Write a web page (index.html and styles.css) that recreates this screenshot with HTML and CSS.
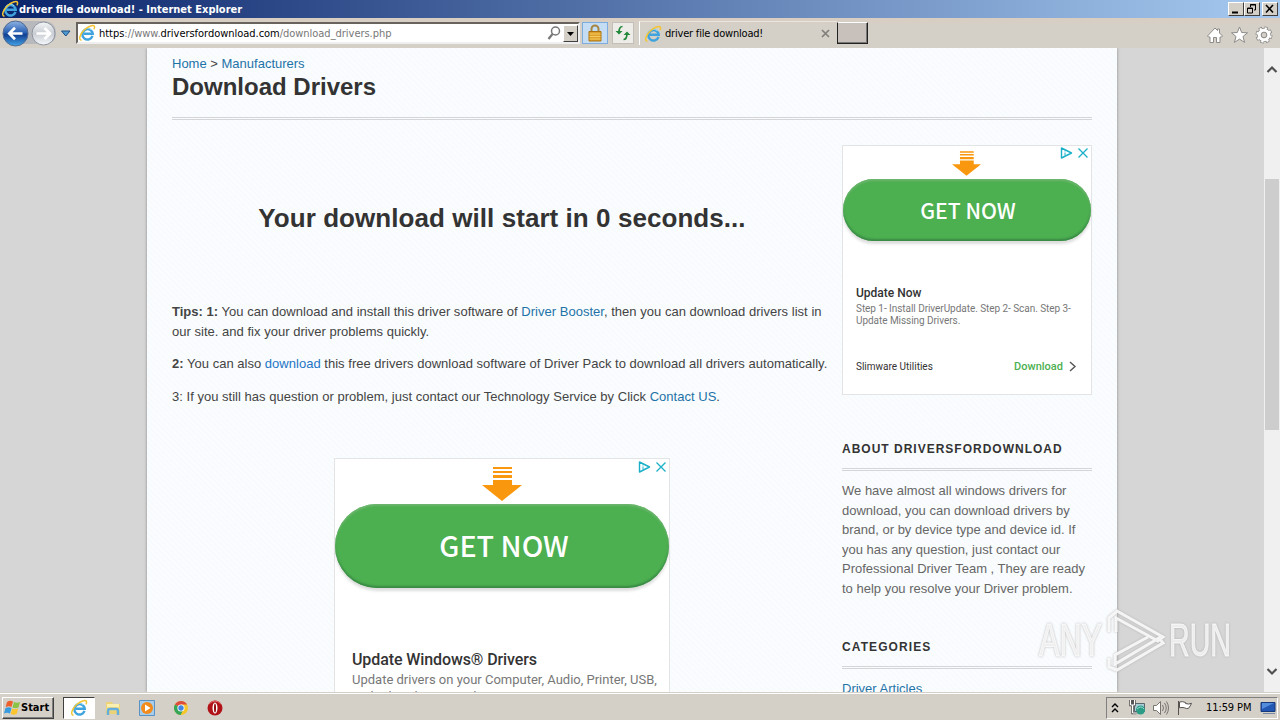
FILE: index.html
```
<!DOCTYPE html>
<html lang="en">
<head>
<meta charset="UTF-8">
<title>driver file download!</title>
<link rel="stylesheet" href="styles.css">
</head>
<body>
<svg class="defs" width="0" height="0">
 <defs>
  <linearGradient id="blue" x1="0" y1="0" x2="0" y2="1">
   <stop offset="0" stop-color="#8eb4e3"/><stop offset=".45" stop-color="#2c62b4"/>
   <stop offset=".55" stop-color="#123f92"/><stop offset="1" stop-color="#43a5e8"/>
  </linearGradient>
  <linearGradient id="silver" x1="0" y1="0" x2="0" y2="1">
   <stop offset="0" stop-color="#f4f6f8"/><stop offset=".5" stop-color="#c9cdd3"/><stop offset="1" stop-color="#f5f9fc"/>
  </linearGradient>
  <symbol id="ie" viewBox="-.5 -.5 17 17">
   <path d="M13.200 10.800A4.900 4.900 0 1 1 13.400 8.700H5" fill="none" stroke="#3fa3de" stroke-width="2.300"/>
   <path d="M4 6.100A5 5 0 0 1 12 5" fill="none" stroke="#8ad6f6" stroke-width="1"/>
   <path d="M2.800 14.800C-.5 14.500 1.300 9 5.600 5 9.400 1.500 14 .1 15 1.600c.5.8.1 2-.5 3" fill="none" stroke="#f2c536" stroke-width="1.400"/>
  </symbol>
  <symbol id="arrow" viewBox="0 0 40 34">
   <path d="M11 0h19v2H11zM11 4h19v2H11zM11 8h19v3H11zM11 13h19v5h10L20 34 0 18h11z" fill="#f9980f"/>
  </symbol>
  <symbol id="adchoices" viewBox="0 0 28 12">
   <path d="M1.500 1v10L11.500 6z" fill="none" stroke="#1bb0c8" stroke-width="1.400" stroke-linejoin="round"/>
   <path d="M5 5.500v3M5 3.500v1" stroke="#1bb0c8"/>
   <path d="M18.500 1.500l9 9M27.500 1.500l-9 9" stroke="#1bb0c8" stroke-width="1.300"/>
  </symbol>
 </defs>
</svg>

<header class="titlebar">
 <svg class="icon18"><use href="#ie"/></svg>
 <span class="title">driver file download! - Internet Explorer</span>
 <div class="window-buttons">
  <span class="wbtn"><svg width="12" height="10"><path d="M2 8.500h6" stroke="#000" stroke-width="2"/></svg></span>
  <span class="wbtn"><svg width="12" height="10"><path d="M4.500 3V.5h5V6H8M4 1h6M1.500 4h5v5h-5zM1 4.500h6" fill="none" stroke="#000"/></svg></span>
  <span class="wbtn last"><svg width="12" height="10"><path d="M2 1l7 7.500M9 1L2 8.500" stroke="#000" stroke-width="1.600"/></svg></span>
 </div>
</header>

<nav class="toolbar">
 <svg class="navbtns" width="76" height="30">
  <path d="M14 3h30q12 1 12 12t-12 11H14z" fill="#b8b9bd"/>
  <circle cx="15.500" cy="15.500" r="12.500" fill="url(#blue)" stroke="#52698e"/>
  <path d="M22.500 15.500H10M15 9.800l-5.700 5.700 5.700 5.700" fill="none" stroke="#fff" stroke-width="2.700"/>
  <circle cx="43.500" cy="15.500" r="11.500" fill="url(#silver)" stroke="#8d949e"/>
  <path d="M36.500 15.500H49M44.500 10l5.500 5.500-5.500 5.500" fill="none" stroke="#fff" stroke-width="2.700"/>
  <path d="M61.500 13h8.500l-4.200 5z" fill="#4e9bd2" stroke="#1c4d83"/>
 </svg>
 <div class="address">
  <svg class="icon18"><use href="#ie"/></svg>
  <span class="url"><b>https</b>://www.<b>driversfordownload.com</b>/download_drivers.php</span>
  <svg class="search" width="15" height="16"><circle cx="8.500" cy="6" r="4" fill="none" stroke="#777" stroke-width="1.500"/><path d="M5.500 9L1.500 14" stroke="#777" stroke-width="2.200"/></svg>
  <span class="dropdown"><svg width="9" height="5"><path d="M1 0h7L4.500 4z"/></svg></span>
 </div>
 <span class="lock"><svg width="16" height="18">
  <path d="M4.500 8V5a3.500 3.500 0 0 1 7 0v3" fill="none" stroke="#a58643" stroke-width="2"/>
  <path d="M2 7.500h12V17H2z" fill="#dda12b" stroke="#a97312"/><path d="M2.500 10h11M2.500 12.500h11M2.500 15h11" stroke="#f5ca61"/>
 </svg></span>
 <span class="refresh"><svg width="16" height="16" fill="none" stroke="#218a3a" stroke-width="1.700">
  <path d="M7.500 1.500q-3.500 0-3.500 6"/><path d="M8.500 14.500q3.500 0 3.500-6"/>
  <path d="M.5 6h7L4 9.500zM8.500 10h7L12 6.500z" fill="#218a3a" stroke="none"/>
 </svg></span>
 <div class="tab">
  <svg class="icon18"><use href="#ie"/></svg>
  <span class="tab-title">driver file download!</span>
  <svg class="tab-close" width="9" height="9"><path d="M1 1l7 7M8 1L1 8" stroke="#827f7b" stroke-width="1.700"/></svg>
 </div>
 <span class="newtab"></span>
 <svg class="tools" width="68" height="18" fill="#fff" stroke="#8d8b88">
  <path d="M1.500 10L9 2l2.500 2.500V3h2v4L16.500 10l-1 1h-1.500V16.500h-3.500v-5h-3v5H4V11H2.500z"/>
  <path d="M33.500 1l2.200 5.500 5.800.3-4.500 3.700 1.600 5.900-5.100-3.300-5.100 3.300 1.600-5.900-4.500-3.700 5.800-.3z"/>
  <circle cx="58" cy="9" r="5.500" fill="none" stroke-width="3"/>
  <circle cx="58" cy="9" r="7" fill="none" stroke-width="3" stroke-dasharray="3.500 2"/>
  <circle cx="58" cy="9" r="6.700" fill="none" stroke="#fff" stroke-width="2" stroke-dasharray="2.200 3.060" stroke-dashoffset="-.5"/>
  <circle cx="58" cy="9" r="4.700" fill="none" stroke="#fff" stroke-width="3"/>
  <circle cx="58" cy="9" r="2.800" fill="#d4d0c8"/>
 </svg>
</nav>

<div class="viewport">
 <div class="page">
  <div class="breadcrumb"><a href="#">Home</a> &gt; <a href="#">Manufacturers</a></div>
  <h1>Download Drivers</h1>
  <div class="columns">
   <main>
    <h2>Your download will start in 0 seconds...</h2>
    <div class="tips">
     <p><b>Tips: 1:</b> You can download and install this driver software of <a href="#">Driver Booster</a>, then you can download drivers list in<br>our site. and fix your driver problems quickly.</p>
     <p><b>2:</b> You can also <a class="bright" href="#">download</a> this free drivers download software of Driver Pack to download all drivers automatically.</p>
     <p>3: If you still has question or problem, just contact our Technology Service by Click <a href="#">Contact US</a>.</p>
    </div>
    <div class="ad ad-large">
     <svg class="choices" width="28" height="12"><use href="#adchoices"/></svg>
     <svg class="down" width="40" height="34"><use href="#arrow"/></svg>
     <div class="get-now">GET NOW</div>
     <div class="ad-title">Update Windows® Drivers</div>
     <div class="ad-text">Update drivers on your Computer, Audio, Printer, USB,<br>and other devices today</div>
    </div>
   </main>
   <aside>
    <div class="ad ad-small">
     <svg class="choices" width="28" height="12"><use href="#adchoices"/></svg>
     <svg class="down" width="29" height="25"><use href="#arrow"/></svg>
     <div class="get-now">GET NOW</div>
     <div class="ad-title">Update Now</div>
     <div class="ad-text">Step 1- Install DriverUpdate. Step 2- Scan. Step 3-<br>Update Missing Drivers.</div>
     <div class="ad-foot">
      <span>Slimware Utilities</span>
      <span class="cta">Download <svg width="8" height="11"><path d="M1 1l5 4.500L1 10" fill="none" stroke="#555" stroke-width="1.400"/></svg></span>
     </div>
    </div>
    <h3>ABOUT DRIVERSFORDOWNLOAD</h3>
    <p>We have almost all windows drivers for<br>download, you can download drivers by<br>brand, or by device type and device id. If<br>you has any question, just contact our<br>Professional Driver Team , They are ready<br>to help you resolve your Driver problem.</p>
    <h3 class="categories">CATEGORIES</h3>
    <p><a href="#">Driver Articles</a></p>
   </aside>
  </div>
 </div>
 <div class="scrollbar">
  <svg width="12" height="9"><path d="M1.500 7L6 2.500 10.500 7" fill="none" stroke="#505050" stroke-width="2.200"/></svg>
  <div class="thumb"></div>
  <svg width="12" height="9"><path d="M1.500 2L6 6.500 10.500 2" fill="none" stroke="#505050" stroke-width="2.200"/></svg>
 </div>
 <svg class="watermark" width="200" height="66">
  <text x="3" y="48" textLength="63" lengthAdjust="spacingAndGlyphs">ANY</text>
  <path d="M73 24V10l8-7 46 26-5 4-42-23v14M73 50v9l8 3 46-27-4-5-44 26V47l33-18"/>
  <text x="133" y="48" textLength="62" lengthAdjust="spacingAndGlyphs">RUN</text>
 </svg>
</div>

<footer class="taskbar">
 <span class="start"><svg width="17" height="17">
  <path d="M3 3q3-2 6-.5L7.500 8Q5 6.500 1.700 8z" fill="#ed602c"/><path d="M10 3q3 1.500 6 0L14.500 8.500q-3 1.500-6 0z" fill="#8bc345"/>
  <path d="M1.500 9q3-1.500 6 0L6 14.500Q3 13 0 14.500z" fill="#379ce0"/><path d="M8.200 9.500q3 1.500 6 0L12.700 15q-3 1.500-6 0z" fill="#fcc52f"/>
 </svg>Start</span>
 <span class="task active"><svg class="icon18"><use href="#ie"/></svg></span>
 <span class="task"><svg width="18" height="18">
  <path d="M2 3h6l1 2h7v10H2z" fill="#ecd276"/><path d="M3 5h12v5H3z" fill="#fbf0b0"/><path d="M2 8h14v4H2z" fill="#efda83"/>
  <path d="M4 16v-4q0-2 2-2h6q2 0 2 2v4" fill="none" stroke="#65aede" stroke-width="2.500"/>
 </svg></span>
 <span class="task"><svg width="18" height="18">
  <path d="M1.500 1.500h15v15h-15z" fill="#a6cdec" stroke="#5a92c4"/><circle cx="9" cy="9" r="6" fill="#f28b1c"/><path d="M7 5.500v7L12.500 9z" fill="#fff"/>
 </svg></span>
 <span class="task"><svg width="18" height="18">
  <circle cx="9" cy="9" r="7" fill="#f5c62c"/><path d="M9 9L2.900 5.500A7 7 0 0 1 15.100 5.500H9z" fill="#dd4b3e"/>
  <path d="M9 9L2.900 5.500A7 7 0 0 0 8.500 16l3.300-6z" fill="#36a557"/><circle cx="9" cy="9" r="3.600" fill="#fff"/><circle cx="9" cy="9" r="2.700" fill="#4385e5"/>
 </svg></span>
 <span class="task"><svg width="18" height="18"><circle cx="9" cy="9" r="7.500" fill="#b01218"/><path d="M3 5q6-6 12 0" fill="none" stroke="#e27070"/><ellipse cx="9" cy="9" rx="2.500" ry="5.500" fill="#fff"/><ellipse cx="9" cy="9" rx="1" ry="4.500" fill="#91090e"/></svg></span>
 <div class="tray">
  <svg width="8" height="12"><path d="M1 5l3-3 3 3M1 10l3-3 3 3" fill="none" stroke="#000" stroke-width="1.400"/></svg>
  <svg class="net" width="18" height="18"><path d="M5.500 4.500h10v8h-10z" fill="#a7ccd5" stroke="#57666b"/><circle cx="11.500" cy="11" r="4.500" fill="#2d9c87"/><path d="M8 10q4-4 7 0" fill="none" stroke="#8edbd0"/><path d="M1.500 1v5h4V1M3.500 1v13h4" fill="none" stroke="#555" stroke-width="2.500"/><path d="M1.500 1v5h4V1M3.500 6v8h4" fill="none" stroke="#fff"/></svg>
  <svg class="sound" width="18" height="18" fill="none" stroke="#77736e"><path d="M1.500 6.500h3l4-4v13l-4-4h-3z" fill="#fff"/><path d="M10.500 6q2 3 0 6M12.500 4q3.500 5 0 10M14.500 2.500q4 6.500 0 13"/></svg>
  <svg class="flag" width="18" height="18"><path d="M2.500 2v14M3.500 3q3-1 6 .5v1q3 1.200 6-.2-1 2.700-3 5-2 .8-4-.5-2.500-.7-5 0z" fill="#fff" stroke="#55524f"/></svg>
  <span class="clock">11:59 PM</span>
  <svg class="desktop" width="17" height="16"><path d="M1 2.500h14v9H1z" fill="#2257b3" stroke="#153979"/><path d="M2 3h12L2 9z" fill="#558ddd"/><path d="M3 13.500h12" stroke="#778aa5"/></svg>
 </div>
</footer>
</body>
</html>
```
FILE: styles.css
```
* {
  box-sizing: border-box;
}
body {
  margin: 0;
  width: 1280px;
  height: 720px;
  overflow: hidden;
  display: flex;
  flex-direction: column;
  font-family: "Liberation Sans", Arial, sans-serif;
  font-size: 13px;
}
svg {
  display: block;
  flex: none;
}
.defs {
  position: absolute;
}
.icon18 {
  width: 18px;
  height: 18px;
}

/* browser chrome */
.titlebar {
  flex: none;
  height: 18px;
  display: flex;
  align-items: center;
  padding-left: 1px;
  background: linear-gradient(to right, #0a246a, #a6caf0);
  color: #fff;
}
.title {
  font: bold 11px "DejaVu Sans Condensed", "DejaVu Sans", sans-serif;
  white-space: nowrap;
}
.window-buttons {
  display: flex;
  margin-left: auto;
  padding-right: 2px;
}
.wbtn {
  width: 16px;
  height: 14px;
  padding: 1px;
  background: #d4d0c8;
  border: 1px solid;
  border-color: #fff #404040 #404040 #fff;
}
.wbtn.last {
  margin-left: 2px;
}
.toolbar {
  flex: none;
  height: 30px;
  display: flex;
  align-items: center;
  background: linear-gradient(#dacdc1, #d4d0c8 8px);
  font: 11px "DejaVu Sans Condensed", "DejaVu Sans", sans-serif;
}
.address {
  width: 504px;
  height: 22px;
  display: flex;
  align-items: center;
  background: #fff;
  border: 2px solid;
  border-color: #68635d #eee #eee #68635d;
}
.url {
  margin-left: 3px;
  color: #777;
  letter-spacing: -.03px;
}
.url b {
  font-weight: normal;
  color: #000;
}
.search {
  margin-left: auto;
  margin-right: 1px;
}
.dropdown {
  width: 15px;
  height: 17px;
  padding: 6px 2px;
  background: #d4d0c8;
  border: 1px solid;
  border-color: #fff #404040 #404040 #fff;
}
.lock {
  width: 26px;
  height: 22px;
  margin-left: 2px;
  padding: 1px 4px;
  background: #c5dcf5;
  border: 1px solid #7eacdd;
}
.refresh {
  width: 22px;
  height: 22px;
  margin-left: 4px;
  padding: 2px;
  background: #eeece8;
  border: 1px solid #c3bfb8;
}
.tab {
  width: 198px;
  height: 24px;
  margin-left: 5px;
  padding: 0 7px 0 4px;
  display: flex;
  align-items: center;
  border-left: 1px solid #fff;
  border-top: 1px solid #e9e6e0;
}
.tab-title {
  margin-left: 3px;
  letter-spacing: -.2px;
}
.tab-close {
  margin-left: auto;
}
.newtab {
  width: 31px;
  height: 22px;
  background: #c8c1bb;
  border: 1px solid;
  border-color: #fff #222 #222 #222;
  box-shadow: inset -1px -1px #777;
}
.tools {
  margin-left: auto;
  margin-right: 6px;
  margin-top: 4px;
}

/* web page */
.viewport {
  position: relative;
  height: 644px;
  display: flex;
  overflow: hidden;
  background: #d6d6d6;
}
.page {
  width: 970px;
  height: 644px;
  margin-left: 147px;
  padding: 6px 25px 0;
  overflow: hidden;
  background: repeating-linear-gradient(45deg, #f8fbfd 0 2px, #fafcfe 2px 4px);
  box-shadow: 0 0 3px #888;
  line-height: 19.5px;
  color: #444;
}
a {
  color: #1e73a8;
  text-decoration: none;
}
a.bright {
  color: #2476c6;
}
.breadcrumb {
  height: 19px;
}
h1 {
  height: 47px;
  margin: 0;
  border-bottom: 3px double #d3d5d6;
  font-size: 24px;
  line-height: 27px;
  color: #333;
}
.columns {
  display: flex;
  justify-content: space-between;
}
main {
  width: 660px;
}
h2 {
  margin: 82px 0 0;
  font-size: 26px;
  letter-spacing: .06px;
  line-height: 32px;
  text-align: center;
  color: #333;
}
.tips {
  padding-top: 68px;
  letter-spacing: .02px;
  white-space: nowrap;
}
p {
  margin: 0 0 13px;
}
aside {
  width: 250px;
  padding-top: 25px;
  color: #666;
}
h3 {
  height: 32px;
  margin: 44px 0 10px;
  border-bottom: 3px double #d3d5d6;
  font-size: 12px;
  letter-spacing: 1px;
  line-height: 20px;
  white-space: nowrap;
  color: #333;
}
h3.categories {
  margin-top: 39px;
  letter-spacing: 1.1px;
}

/* adverts */
.ad {
  position: relative;
  background: #fff;
  border: 1px solid #e2e4e6;
  font-family: Roboto, sans-serif;
  color: #777;
  white-space: nowrap;
}
.choices {
  position: absolute;
  top: 2px;
  right: 3px;
}
.get-now {
  background: #4caf50;
  color: #fff;
  text-align: center;
  font-family: "Noto Sans CJK SC", sans-serif;
  font-weight: 500;
  box-shadow: inset 0 2px 2px #6cb56d, inset 0 -2px 2px #398945, 0 3px 3px #ddd;
}
.ad-title {
  font-weight: 500;
  color: #333;
}
.ad-large {
  width: 336px;
  height: 280px;
  margin: 52px auto 0 162px;
}
.ad-large .down {
  margin: 8px auto 3px 147px;
}
.ad-large .get-now {
  height: 84px;
  border-radius: 42px;
  font-size: 28.7px;
  line-height: 81px;
  padding-left: 4px;
}
.ad-large .ad-title {
  margin: 62px 0 0 17px;
  font-size: 16px;
  letter-spacing: -.1px;
  line-height: 20px;
}
.ad-large .ad-text {
  margin-left: 17px;
  font-size: 13px;
  line-height: 17px;
  padding-top: 1px;
}
.ad-small {
  height: 250px;
}
.ad-small .choices {
  top: 1px;
}
.ad-small .down {
  margin: 5px auto 3px 109px;
}
.ad-small .get-now {
  height: 62px;
  border-radius: 31px;
  font-size: 21.2px;
  line-height: 61px;
  padding-left: 2px;
}
.ad-small .ad-title {
  margin: 44px 0 0 13px;
  font-size: 12px;
  line-height: 16px;
}
.ad-small .ad-text {
  margin-left: 13px;
  font-size: 10px;
  letter-spacing: -.05px;
  line-height: 12px;
  padding-top: 2px;
}
.ad-foot {
  display: flex;
  justify-content: space-between;
  align-items: center;
  margin: 30px 14px 0 13px;
  font-size: 10px;
  color: #333;
}
.cta {
  display: flex;
  align-items: center;
  gap: 6px;
  margin-top: -1px;
  font-size: 11px;
  font-weight: 500;
  color: #4caf50;
}

.scrollbar {
  width: 16px;
  height: 644px;
  margin-left: auto;
  display: flex;
  flex-direction: column;
  align-items: center;
  justify-content: space-between;
  padding: 17px 0 16px;
  background: #f0f0f0;
}
.thumb {
  width: 14px;
  height: 251px;
  margin-bottom: 132px;
  background: #cdcdcd;
}
.watermark {
  position: absolute;
  left: 1036px;
  top: 560px;
  fill: rgba(255, 255, 255, .75);
  stroke: rgba(255, 255, 255, .75);
  filter: drop-shadow(0 0 1px #aaa);
  font: 47px "Liberation Sans", Arial, sans-serif;
}
.watermark path {
  fill: none;
  stroke: rgba(255, 255, 255, .85);
  stroke-width: 3;
}

/* taskbar */
.taskbar {
  flex: none;
  height: 28px;
  display: flex;
  align-items: center;
  padding: 2px 2px 0;
  background: #d4d0c8;
  border-top: 1px solid #d4d0c8;
  box-shadow: inset 0 1px #fff;
  font: 11px "DejaVu Sans Condensed", "DejaVu Sans", sans-serif;
}
.start {
  width: 52px;
  height: 22px;
  display: flex;
  align-items: center;
  padding-left: 1px;
  font-weight: bold;
  border: 1px solid;
  border-color: #fff #404040 #404040 #fff;
  box-shadow: inset -1px -1px #808080;
}
.task {
  width: 32px;
  height: 22px;
  margin-left: 2px;
  display: flex;
  align-items: center;
  justify-content: center;
}
.task.active {
  margin-left: 9px;
  background: #fff;
  border: 1px solid;
  border-color: #404040 #fff #fff #404040;
}
.tray {
  width: 172px;
  height: 22px;
  margin-left: auto;
  padding-left: 4px;
  display: flex;
  align-items: center;
  border: 1px solid;
  border-color: #808080 #fff #fff #808080;
}
.net {
  margin-left: 10px;
}
.sound {
  margin-left: 5px;
}
.flag {
  margin-left: 6px;
}
.clock {
  margin-left: 12px;
  letter-spacing: -.1px;
  white-space: nowrap;
}
.desktop {
  margin-left: auto;
}
```
